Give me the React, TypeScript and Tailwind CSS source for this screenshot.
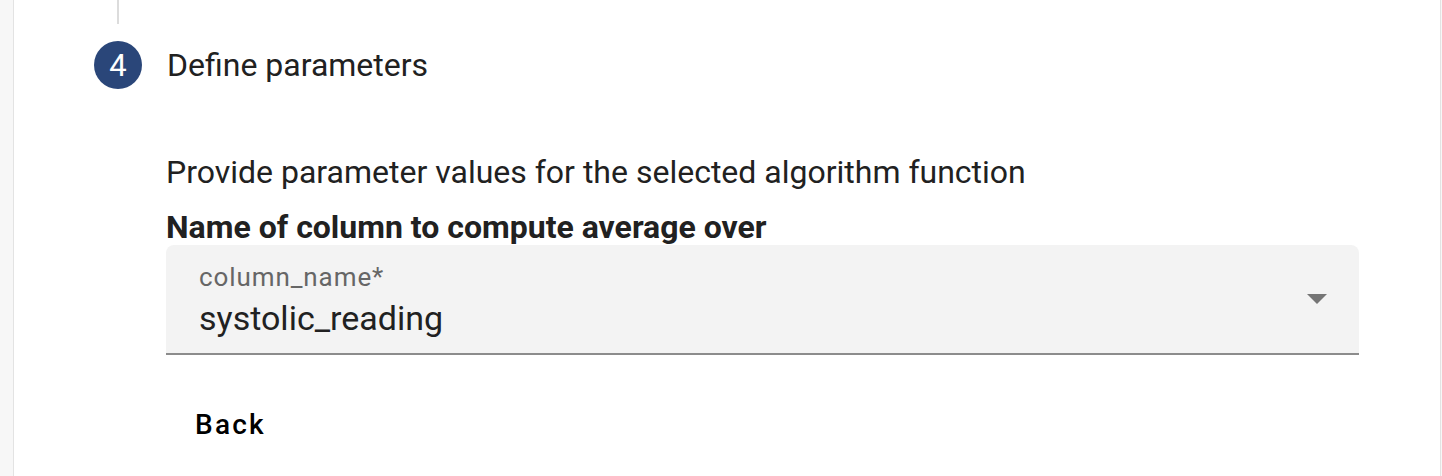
// Step 4 of the algorithm wizard, drawn at 2x

const ArrowDown = () => (
  <svg width="20" height="10" viewBox="0 0 20 10" className="shrink-0">
    <path d="M0 0 L20 0 L10 10 Z" fill="#757575" />
  </svg>
)

const App = () => {
  return (
    <div
      className="w-full h-[476px] bg-[#f7f7f7] pl-[13px] pr-[1px] flex overflow-hidden"
      style={{ fontFamily: 'Roboto, "Liberation Sans", sans-serif' }}
    >
      <div className="flex-1 bg-white border-l border-r border-[#e3e3e3] pl-[80px] flex flex-col">
        {/* connector from previous step */}
        <div className="w-[2px] h-[24px] bg-[#dcdcdc] ml-[23px]" />

        <div className="mt-[17px] h-[48px] flex items-center">
          <div className="w-[48px] h-[48px] rounded-full bg-[#2a4679] text-white flex items-center justify-center text-[31px] leading-none">
            4
          </div>
          <span className="ml-[25px] text-[32px] leading-[36px] text-[#212121]">
            Define parameters
          </span>
        </div>

        <div className="pl-[72px] pr-[81px] flex flex-col">
          <p className="mt-[65px] text-[32px] leading-[36px] text-[#212121]">
            Provide parameter values for the selected algorithm function
          </p>
          <p className="mt-[19px] text-[32px] leading-[36px] font-bold text-[#212121]">
            Name of column to compute average over
          </p>

          <div className="h-[110px] bg-[#f3f3f3] rounded-t-[8px] border-b-2 border-[#8c8c8c] flex items-center pl-[33px] pr-[32px]">
            <div className="flex-1 flex flex-col pt-[1px]">
              <span className="text-[26px] leading-[28px] tracking-[0.035em] text-[#666666]">column_name*</span>
              <span className="mt-[8px] text-[34px] leading-[38px] text-[#212121]">systolic_reading</span>
            </div>
            <ArrowDown />
          </div>

          <div className="mt-[52px] pl-[29px]">
            <span className="text-[28px] leading-[36px] font-medium tracking-[0.08em] text-black">
              Back
            </span>
          </div>
        </div>
      </div>
    </div>
  )
}

export default App
